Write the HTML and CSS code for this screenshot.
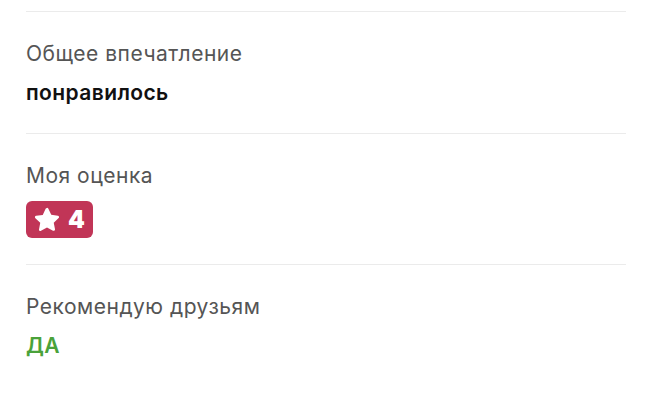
FILE: index.html
```html
<!DOCTYPE html>
<html lang="ru">
<head>
  <meta charset="UTF-8">
  <meta name="viewport" content="width=device-width, initial-scale=1.0">
  <title>Отзыв</title>
  <link rel="stylesheet" href="styles.css">
</head>
<body>
  <div class="review">
    <div class="review-row">
      <div class="row-label">Общее впечатление</div>
      <div class="row-value">понравилось</div>
    </div>

    <div class="review-row">
      <div class="row-label">Моя оценка</div>
      <div class="rating-badge">
        <svg class="star" viewBox="0 0 24 24" width="30" height="30">
          <path d="M12 2.2c.5 0 .9.3 1.1.7l2.3 4.9 5.3.7c.9.1 1.3 1.3.6 1.9l-3.9 3.7 1 5.3c.2.9-.8 1.6-1.6 1.1L12 18l-4.8 2.6c-.8.5-1.8-.2-1.6-1.1l1-5.3-3.9-3.7c-.7-.6-.3-1.8.6-1.9l5.3-.7 2.3-4.9c.2-.4.6-.7 1.1-.7z" fill="#fff"/>
        </svg>
        <span class="rating-num">4</span>
      </div>
    </div>

    <div class="review-row">
      <div class="row-label">Рекомендую друзьям</div>
      <div class="row-value yes">ДА</div>
    </div>
  </div>
</body>
</html>
```

FILE: styles.css
```css
/* Page */
body {
  margin: 0;
  padding: 11px 24px 0 26px;
  background: #fff;
  font-family: Inter, Roboto, 'Noto Sans', sans-serif;
}

/* Rows */
.review-row {
  border-top: 1px solid #ebebeb;
  padding: 28px 0 26px;
  display: flex;
  flex-direction: column;
  align-items: flex-start;
  gap: 11px;
}
.row-label {
  font-size: 21px;
  line-height: 28px;
  letter-spacing: 0.5px;
  color: #555;
}
.row-value {
  font-size: 21px;
  line-height: 28px;
  letter-spacing: 0.4px;
  font-weight: 600;
  color: #111;
}
.row-value.yes {
  color: #4aa23a;
}

/* Rating badge */
.rating-badge {
  display: flex;
  align-items: center;
  gap: 6px;
  height: 37px;
  padding: 0 8px 0 6px;
  background: #c13557;
  border-radius: 6px;
  color: #fff;
}
.rating-num {
  font-size: 24px;
  font-weight: 900;
}
```
